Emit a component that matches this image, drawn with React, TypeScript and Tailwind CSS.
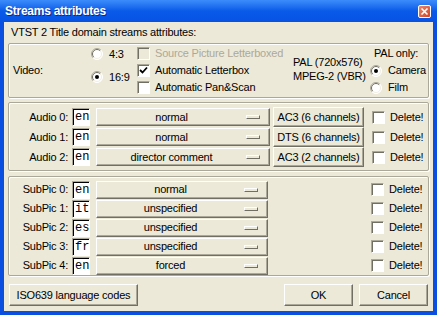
import React from 'react';

const raised = 'bg-[#ece9d8] border border-t-white border-l-white border-r-[#716f64] border-b-[#716f64] shadow-[inset_-1px_-1px_#aca899]';

function Radio({ on }: { on?: boolean }) {
  return (
    <svg width="12" height="12" viewBox="0 0 12 12" className="shrink-0">
      <circle cx="6" cy="6" r="5.5" fill="#fff" />
      <path d="M2.1 9.9 A5.5 5.5 0 0 1 9.9 2.1" fill="none" stroke="#aca899" />
      <path d="M2.8 9.2 A4.5 4.5 0 0 1 9.2 2.8" fill="none" stroke="#716f64" />
      <path d="M9.9 2.1 A5.5 5.5 0 0 1 2.1 9.9" fill="none" stroke="#fff" />
      <path d="M9.2 2.8 A4.5 4.5 0 0 1 2.8 9.2" fill="none" stroke="#f1efe2" />
      {on && <circle cx="6" cy="6" r="2" fill="#000" />}
    </svg>
  );
}

function Check({ on, disabled }: { on?: boolean; disabled?: boolean }) {
  return (
    <div
      className={
        'w-[13px] h-[13px] shrink-0 border border-t-[#aca899] border-l-[#aca899] border-r-white border-b-white shadow-[inset_1px_1px_#716f64] ' +
        (disabled ? 'bg-[#ece9d8]' : 'bg-white')
      }
    >
      {on && (
        <svg width="11" height="11" viewBox="0 0 11 11">
          <polyline points="2,5 4.5,7.5 9,2.5" fill="none" stroke="#000" strokeWidth="1.8" />
        </svg>
      )}
    </div>
  );
}

function Lang({ code }: { code: string }) {
  return (
    <div className="ml-[4px] w-[18px] h-[18px] bg-white border border-t-[#aca899] border-l-[#aca899] border-r-white border-b-white shadow-[inset_1px_1px_#000] flex items-center pl-[2px] font-['Liberation_Mono',monospace] text-[12px] tracking-normal leading-none">
      {code}
    </div>
  );
}

function Drop({ label, w }: { label: string; w: string }) {
  return (
    <div className={`${raised} ${w} ml-[6px] h-[18px] flex items-center`}>
      <span className="flex-1 text-center">{label}</span>
      <span className="w-[14px] h-[4px] mr-[9px] border border-t-white border-l-white border-r-[#716f64] border-b-[#716f64]" />
    </div>
  );
}

function Del() {
  return (
    <div className="flex items-center">
      <Check />
      <span className="ml-[5px]">Delete!</span>
    </div>
  );
}

const audio = [
  ['Audio 0:', 'en', 'normal', 'AC3 (6 channels)'],
  ['Audio 1:', 'en', 'normal', 'DTS (6 channels)'],
  ['Audio 2:', 'en', 'director comment', 'AC3 (2 channels)'],
];

const subs = [
  ['SubPic 0:', 'en', 'normal'],
  ['SubPic 1:', 'it', 'unspecified'],
  ['SubPic 2:', 'es', 'unspecified'],
  ['SubPic 3:', 'fr', 'unspecified'],
  ['SubPic 4:', 'en', 'forced'],
];

const group = 'mx-[4px] border border-[#aca899] rounded-[2px] shadow-[inset_1px_1px_#fff,1px_1px_#fff]';

export default function App() {
  return (
    <div className="w-[437px] h-[315px] bg-[#0a4fe0] flex flex-col font-['Liberation_Sans',Arial,sans-serif] text-[11px] tracking-[-0.2px] text-black select-none">
      <header className="h-[22px] shrink-0 bg-gradient-to-b from-[#3c8cfb] via-[#0a5ae9] to-[#0752e4] flex items-center pl-[5px] pr-[6px]">
        <h1 className="flex-1 text-white font-bold text-[12px] tracking-[-0.25px] [text-shadow:1px_1px_#0a2a8a]">Streams attributes</h1>
        <div className="w-[13px] h-[13px] rounded-[2px] border border-white bg-gradient-to-br from-[#e9866c] to-[#d3431f] flex items-center justify-center">
          <svg width="9" height="9" viewBox="0 0 9 9">
            <path d="M1.5 1.5 L7.5 7.5 M7.5 1.5 L1.5 7.5" stroke="#fff" strokeWidth="1.6" />
          </svg>
        </div>
      </header>

      <main className="mx-[4px] mb-[4px] flex-1 bg-[#ece9d8] flex flex-col pt-[3px] pb-[5px]">
        <p className="h-[14px] leading-[14px] pl-[7px]">VTST 2 Title domain streams attributes:</p>

        <section className={`${group} mt-[4px] h-[55px] flex`}>
          <div className="w-[82px] pl-[4px] flex items-center">Video:</div>
          <div className="w-[46px] flex flex-col pt-[3px] gap-[9px]">
            <label className="h-[14px] flex items-center gap-[6px]"><Radio />4:3</label>
            <label className="h-[14px] flex items-center gap-[6px]"><Radio on />16:9</label>
          </div>
          <div className="w-[156px] flex flex-col pt-[1px]">
            <label className="h-[17px] flex items-center gap-[5px] text-[#aca899]"><Check disabled />Source Picture Letterboxed</label>
            <label className="h-[17px] flex items-center gap-[5px]"><Check on />Automatic Letterbox</label>
            <label className="h-[17px] flex items-center gap-[5px]"><Check />Automatic Pan&amp;Scan</label>
          </div>
          <div className="w-[77px] pt-[11px] leading-[14px]">
            <p>PAL (720x576)</p>
            <p>MPEG-2 (VBR)</p>
          </div>
          <div className="flex flex-col pt-[1px]">
            <p className="h-[17px] flex items-center pl-[4px]">PAL only:</p>
            <label className="h-[17px] flex items-center gap-[6px]"><Radio on />Camera</label>
            <label className="h-[17px] flex items-center gap-[6px]"><Radio />Film</label>
          </div>
        </section>

        <section className={`${group} mt-[4px] h-[69px] flex flex-col pt-[4px]`}>
          {audio.map(([l, c, d, f]) => (
            <div key={l} className="h-[20px] flex items-center">
              <span className="w-[59px] text-right">{l}</span>
              <Lang code={c} />
              <Drop label={d} w="w-[174px]" />
              <div className={`${raised} ml-[3px] w-[91px] h-[20px] flex items-center justify-center`}>{f}</div>
              <div className="ml-[8px]"><Del /></div>
            </div>
          ))}
        </section>

        <section className={`${group} mt-[5px] h-[100px] flex flex-col pt-[3px]`}>
          {subs.map(([l, c, d]) => (
            <div key={l} className="h-[19px] flex items-center">
              <span className="w-[59px] text-right">{l}</span>
              <Lang code={c} />
              <Drop label={d} w="w-[172px]" />
              <div className="ml-[103px]"><Del /></div>
            </div>
          ))}
        </section>

        <footer className="mt-[8px] h-[22px] flex px-[5px]">
          <button className={`${raised} w-[129px] h-[22px]`}>ISO639 language codes</button>
          <button className={`${raised} ml-auto w-[69px] h-[22px]`}>OK</button>
          <button className={`${raised} ml-[6px] w-[69px] h-[22px]`}>Cancel</button>
        </footer>
      </main>
    </div>
  );
}
